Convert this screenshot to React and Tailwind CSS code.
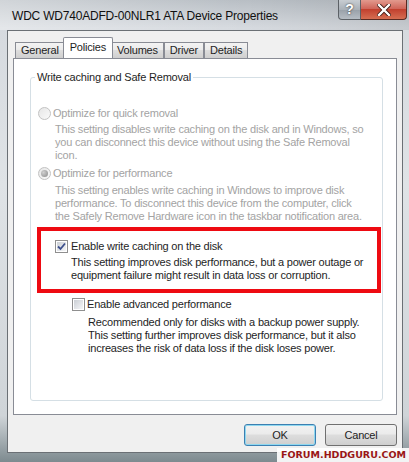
import React from 'react';

const FONT = "[font-family:'Liberation_Sans',Arial,sans-serif]";

function Radio({ checked }) {
  return (
    <span className="w-[13px] h-[13px] rounded-full border border-[#c2c2c2] bg-[linear-gradient(135deg,#e6e6e6,#fafafa)] flex items-center justify-center shrink-0">
      {checked && <span className="w-[7px] h-[7px] rounded-full bg-[radial-gradient(circle_at_35%_35%,#d0d0d0,#8a8a8a)]" />}
    </span>
  );
}

function Checkbox({ checked }) {
  return (
    <span className="w-[13px] h-[13px] border border-[#8f8f8f] bg-white p-[1px] shrink-0 flex">
      <span className="flex-1 bg-[linear-gradient(135deg,#cbcfd5,#f5f6f8)] flex items-center justify-center">
        {checked && (
          <svg width="9" height="9" viewBox="0 0 9 9">
            <path d="M1 4.5 L3.5 7 L8 1.5" fill="none" stroke="#3c4f8c" strokeWidth="1.8" />
          </svg>
        )}
      </span>
    </span>
  );
}

function Tab({ label, active }) {
  if (active) {
    return (
      <div className="h-[21px] -mx-[2px] px-[6px] bg-white border border-b-0 border-[#898c95] rounded-t-[2px] relative z-10 -mb-[1px] flex items-start pt-[3px] text-[#1e1e1e]">
        {label}
      </div>
    );
  }
  return (
    <div className="h-[16px] mt-[5px] px-[5px] bg-[linear-gradient(to_bottom,#f3f3f3,#ebebeb_45%,#dddddd_50%,#cfcfcf)] border border-b-0 border-[#898c95] flex items-center text-[#1e1e1e]">
      {label}
    </div>
  );
}

export default function App() {
  return (
    <div className={`w-[409px] h-[462px] overflow-hidden relative flex flex-col bg-[linear-gradient(to_bottom,#b8bec4,#d6dadf_6%,#dfe3e6_40%,#cfd4d8_90%,#7d8a8f)] text-[11px] leading-[13px] tracking-[-0.2px] whitespace-nowrap ${FONT}`}>
      {/* title bar */}
      <div className="h-[30px] flex justify-between shrink-0 bg-[linear-gradient(to_right,rgba(255,255,255,0.35),rgba(255,255,255,0)_60%,rgba(0,0,0,0.08))]">
        <div className="pl-[12px] pt-[9px] text-[12px] leading-[15px] text-[#101010]">
          WDC WD740ADFD-00NLR1 ATA Device Properties
        </div>
        <div className="flex pr-[2px] h-[20px]">
          <div className="w-[23px] h-[20px] border border-[#5c6166] border-t-0 rounded-bl-[4px] bg-[linear-gradient(to_bottom,#c8cdd2,#aab1b8_50%,#98a0a8_51%,#b6bdc4)] flex items-center justify-center text-white font-bold text-[14px] [text-shadow:0_0_2px_#202020]">
            ?
          </div>
          <div className="w-[46px] h-[20px] border border-[#5a2a22] border-t-0 border-l-0 rounded-br-[4px] bg-[linear-gradient(to_bottom,#e29a8e,#d0665a_45%,#c2412f_50%,#d66e52)] flex items-center justify-center">
            <svg width="14" height="12" viewBox="0 0 14 12">
              <path d="M2 1 L12 11 M12 1 L2 11" stroke="#3a1610" strokeWidth="4" strokeLinecap="square" />
              <path d="M2 1 L12 11 M12 1 L2 11" stroke="#ffffff" strokeWidth="2.4" strokeLinecap="square" />
            </svg>
          </div>
        </div>
      </div>

      {/* client area */}
      <div className="ml-[7px] mr-[6px] h-[423px] border border-[#6b7075] bg-[#f0f0f0] flex flex-col">
        {/* tabs */}
        <div className="ml-[5px] mt-[6px] mr-[5px] flex flex-col">
          <div className="flex pl-[2px] h-[21px] items-start">
            <Tab label="General" />
            <Tab label="Policies" active />
            <Tab label="Volumes" />
            <Tab label="Driver" />
            <Tab label="Details" />
          </div>
          <div className="h-[357px] border border-[#898c95] bg-white pt-[12px] pl-[16px] pr-[13px] pb-[13px] flex">
            <fieldset className="flex-1 border border-[#d5dfe5] rounded-[3px] min-w-0">
              <legend className="ml-[4px] px-[2px] text-[#1e1e1e]">Write caching and Safe Removal</legend>
              <div className="pt-[23px] pl-[7px] flex flex-col">
                <div className="flex items-center gap-[2px] h-[13px] text-[#a3a3a3]">
                  <Radio />
                  <span>Optimize for quick removal</span>
                </div>
                <div className="ml-[17px] mt-[3px] text-[#a3a3a3]">
                  This setting disables write caching on the disk and in Windows, so<br />
                  you can disconnect this device without using the Safe Removal<br />
                  icon.
                </div>
                <div className="flex items-center gap-[2px] h-[13px] mt-[5px] text-[#a3a3a3]">
                  <Radio checked />
                  <span>Optimize for performance</span>
                </div>
                <div className="ml-[17px] mt-[4px] text-[#a3a3a3]">
                  This setting enables write caching in Windows to improve disk<br />
                  performance. To disconnect this device from the computer, click<br />
                  the Safely Remove Hardware icon in the taskbar notification area.
                </div>
              </div>
              <div className="ml-[6px] mr-[1px] mt-[4px] border-[4px] border-[#ee0a12] pl-[14px] pt-[9px] pb-[7px]">
                <div className="flex items-center gap-[3px] h-[13px] text-[#1e1e1e]">
                  <Checkbox checked />
                  <span>Enable write caching on the disk</span>
                </div>
                <div className="ml-[16px] mt-[3px] text-[#1e1e1e]">
                  This setting improves disk performance, but a power outage or<br />
                  equipment failure might result in data loss or corruption.
                </div>
              </div>
              <div className="pl-[41px] mt-[5px] flex flex-col">
                <div className="flex items-center gap-[2px] h-[13px] text-[#1e1e1e]">
                  <Checkbox />
                  <span>Enable advanced performance</span>
                </div>
                <div className="ml-[16px] mt-[5px] text-[#1e1e1e]">
                  Recommended only for disks with a backup power supply.<br />
                  This setting further improves disk performance, but it also<br />
                  increases the risk of data loss if the disk loses power.
                </div>
              </div>
            </fieldset>
          </div>
        </div>

        {/* buttons */}
        <div className="mt-[9px] pr-[5px] flex justify-end gap-[9px]">
          <button className="w-[72px] h-[22px] rounded-[3px] border border-[#3c7fb1] shadow-[inset_0_0_0_1px_#8fd8f0] bg-[linear-gradient(to_bottom,#f2f2f2,#ebebeb_45%,#dddddd_50%,#cfcfcf)] text-[#1e1e1e]">
            OK
          </button>
          <button className="w-[72px] h-[22px] rounded-[3px] border border-[#707070] bg-[linear-gradient(to_bottom,#f2f2f2,#ebebeb_45%,#dddddd_50%,#cfcfcf)] text-[#1e1e1e]">
            Cancel
          </button>
        </div>
      </div>

      {/* watermark */}
      <div className="absolute right-0 bottom-0 h-[14px] pl-[4px] pr-[3px] bg-white/90 flex items-center [font-family:'DejaVu_Sans',Verdana,sans-serif] font-bold text-[9.5px] leading-[12px] tracking-normal text-[#9a1616]">
        FORUM.HDDGURU.COM
      </div>
    </div>
  );
}
